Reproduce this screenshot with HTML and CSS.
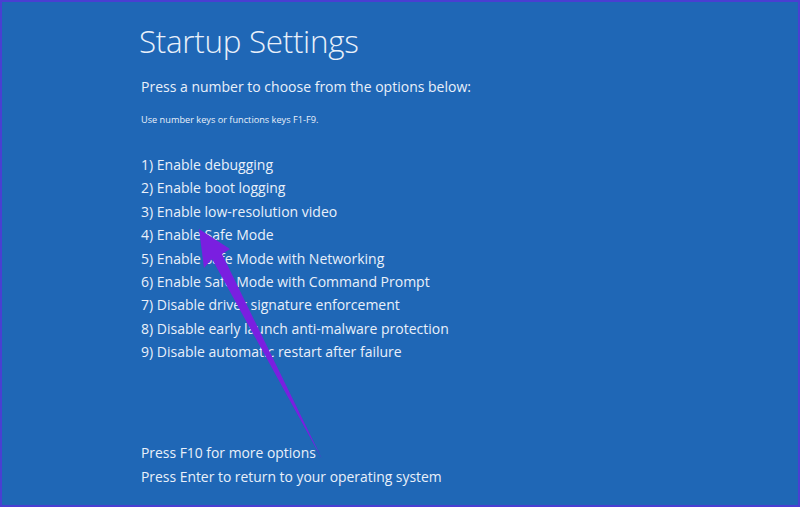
FILE: index.html
```html
<!DOCTYPE html>
<html>
<head>
<meta charset="utf-8">
<link rel="stylesheet" href="styles.css">
</head>
<body>
<div class="screen">
  <div class="content">
    <h1 class="title">Startup Settings</h1>
    <p class="lead">Press a number to choose from the options below:</p>
    <p class="hint">Use number keys or functions keys F1-F9.</p>
    <ol class="options">
      <li>1) Enable debugging</li>
      <li>2) Enable boot logging</li>
      <li>3) Enable low-resolution video</li>
      <li>4) Enable Safe Mode</li>
      <li>5) Enable Safe Mode with Networking</li>
      <li>6) Enable Safe Mode with Command Prompt</li>
      <li>7) Disable driver signature enforcement</li>
      <li>8) Disable early launch anti-malware protection</li>
      <li>9) Disable automatic restart after failure</li>
    </ol>
    <div class="footer">
      <p>Press F10 for more options</p>
      <p>Press Enter to return to your operating system</p>
    </div>
  </div>
  <svg class="arrow" width="800" height="507" viewBox="0 0 800 507">
    <polygon points="199,229 230,249 222,254 322,459 212,259 204,268" fill="#7a1fe0"/>
  </svg>
</div>
</body>
</html>
```

FILE: styles.css
```css
* { box-sizing: border-box; }
html, body { margin: 0; padding: 0; }
body {
  width: 800px;
  height: 507px;
  overflow: hidden;
  font-family: "Open Sans", "Noto Sans", sans-serif;
}
.screen {
  position: relative;
  width: 800px;
  height: 507px;
  background: #1f67b6;
  border: 2px solid #4a3fd2;
  color: #e9f0fa;
}
.content {
  display: flex;
  flex-direction: column;
  padding: 19px 0 0 137px;
}
.title {
  margin: 0;
  font-weight: 300;
  font-size: 31.4px;
  line-height: 40px;
  letter-spacing: -0.3px;
}
.lead {
  margin: 16px 0 0 2px;
  font-size: 14px;
  line-height: 20px;
  font-weight: 400;
}
.hint {
  margin: 16px 0 0 2px;
  font-size: 9.2px;
  line-height: 14px;
}
.options {
  list-style: none;
  margin: 26px 0 0 2px;
  padding: 0;
  font-size: 14px;
  line-height: 23.4px;
}
.footer {
  margin: 77px 0 0 2px;
  font-size: 13.9px;
  line-height: 24px;
}
.footer p { margin: 0; }
.arrow {
  position: absolute;
  left: -2px;
  top: -2px;
}
```
